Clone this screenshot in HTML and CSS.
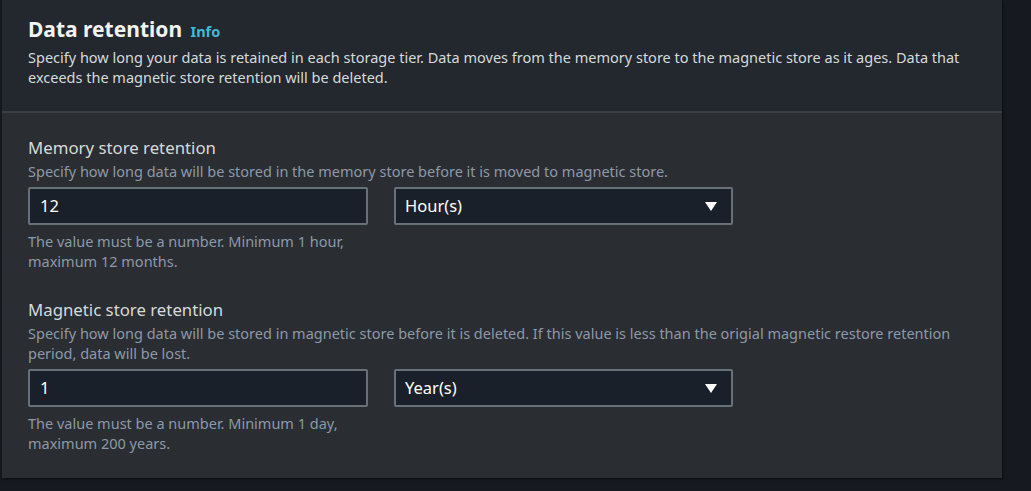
FILE: index.html
```html
<!DOCTYPE html>
<html lang="en">
<head>
<meta charset="utf-8">
<title>Data retention</title>
<link rel="stylesheet" href="styles.css">
</head>
<body>
<div class="page">
  <section class="card">
    <header class="card-header">
      <h2 class="title">Data retention <a class="info" href="#">Info</a></h2>
      <p class="header-desc">Specify how long your data is retained in each storage tier. Data moves from the memory store to the magnetic store as it ages. Data that exceeds the magnetic store retention will be deleted.</p>
    </header>
    <div class="card-body">
      <div class="field">
        <div class="label">Memory store retention</div>
        <div class="desc">Specify how long data will be stored in the memory store before it is moved to magnetic store.</div>
        <div class="controls">
          <div class="input">12</div>
          <div class="select"><span>Hour(s)</span><span class="caret"></span></div>
        </div>
        <div class="hint">The value must be a number. Minimum 1 hour,<br>maximum 12 months.</div>
      </div>
      <div class="field field-2">
        <div class="label">Magnetic store retention</div>
        <div class="desc">Specify how long data will be stored in magnetic store before it is deleted. If this value is less than the origial magnetic restore retention period, data will be lost.</div>
        <div class="controls">
          <div class="input">1</div>
          <div class="select"><span>Year(s)</span><span class="caret"></span></div>
        </div>
        <div class="hint">The value must be a number. Minimum 1 day,<br>maximum 200 years.</div>
      </div>
    </div>
  </section>
</div>
</body>
</html>
```

FILE: styles.css
```css
* { box-sizing: border-box; }
html, body { margin: 0; padding: 0; }
body {
  background: #16191f;
  font-family: "Noto Sans", "Open Sans", sans-serif;
  width: 1031px;
  height: 491px;
  overflow: hidden;
}
.page { padding-left: 2px; }
.card {
  width: 1000px;
  background: #2a2d32;
  box-shadow: 1px 1px 2px rgba(0,0,0,0.5);
}
.card-header {
  background: #23272e;
  padding: 15px 26px 24px 26px;
  border-bottom: 2px solid #3a3f47;
}
.title {
  margin: 0;
  font-size: 21px;
  line-height: 28px;
  height: 28px;
  font-weight: 700;
  color: #f2f3f3;
}
.info {
  font-size: 14.5px;
  font-weight: 700;
  color: #44b9d6;
  text-decoration: none;
  margin-left: 3px;
}
.header-desc {
  margin: 4px 0 0 0;
  font-size: 14.5px;
  line-height: 20px;
  color: #d5dbdb;
}
.card-body {
  padding: 24px 26px 25px 26px;
}
.field-2 { margin-top: 28px; }
.label {
  font-size: 16.8px;
  line-height: 22px;
  margin-bottom: 2px;
  color: #d5dbdb;
}
.desc, .hint {
  font-size: 14.5px;
  line-height: 20px;
  color: #8d99a8;
}
.controls {
  display: flex;
  gap: 26px;
  margin: 6px 0;
}
.input, .select {
  height: 38px;
  border: 2px solid #687078;
  border-radius: 2px;
  background: #1a2029;
  color: #ffffff;
  font-size: 16.5px;
  line-height: 34px;
  padding: 0 10px;
}
.input { width: 340px; }
.select {
  width: 339px;
  padding-left: 9px;
  display: flex;
  justify-content: space-between;
  align-items: center;
}
.caret {
  width: 0; height: 0;
  border-left: 6px solid transparent;
  border-right: 6px solid transparent;
  border-top: 9px solid #ffffff;
  margin-right: 4px;
}
```
